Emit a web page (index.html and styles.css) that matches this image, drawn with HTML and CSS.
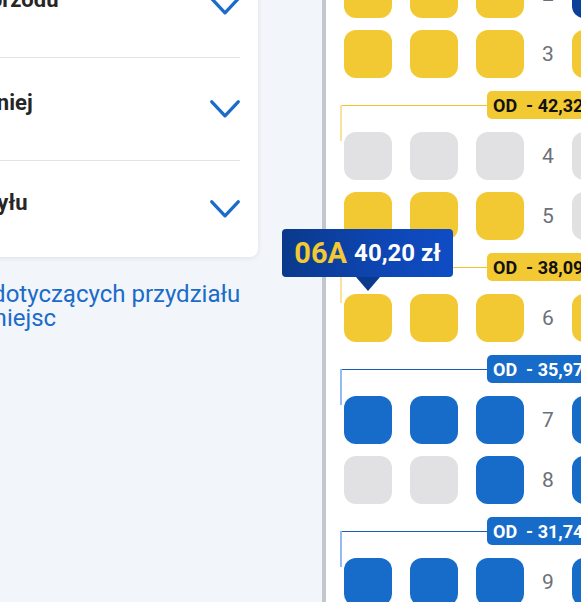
FILE: index.html
```html
<!DOCTYPE html>
<html lang="pl">
<head>
<meta charset="utf-8">
<title>Wybór miejsca</title>
<link rel="stylesheet" href="styles.css">
</head>
<body>
<div class="page">
  <aside class="side">
    <div class="card">
      <div class="opt">
        <span class="opt-label">Miejsce bliżej przodu</span>
        <svg class="chev" viewBox="0 0 30 18" width="30" height="18"><path d="M1.8 1.8 L15 15.8 L28.2 1.8"/></svg>
      </div>
      <div class="opt">
        <span class="opt-label">Miejsce w średniej</span>
        <svg class="chev" viewBox="0 0 30 18" width="30" height="18"><path d="M1.8 1.8 L15 15.8 L28.2 1.8"/></svg>
      </div>
      <div class="opt opt-last">
        <span class="opt-label">Miejsce bliżej tyłu</span>
        <svg class="chev" viewBox="0 0 30 18" width="30" height="18"><path d="M1.8 1.8 L15 15.8 L28.2 1.8"/></svg>
      </div>
    </div>
    <p class="info">Więcej informacji dotyczących przydziału miejsc</p>
  </aside>

  <main class="map">
    <div class="rows">
      <div class="row">
        <span class="seat y"></span><span class="seat y"></span><span class="seat y"></span>
        <span class="num">2</span>
        <span class="seat n"></span><span class="seat y"></span><span class="seat y"></span>
      </div>
      <div class="row">
        <span class="seat y"></span><span class="seat y"></span><span class="seat y"></span>
        <span class="num">3</span>
        <span class="seat y"></span><span class="seat y"></span><span class="seat y"></span>
      </div>

      <div class="ghead gy"><span class="grule"></span><span class="badge">OD<span class="bprice">- 42,32 zł</span></span><span class="gtail"></span></div>
      <div class="row">
        <span class="seat g"></span><span class="seat g"></span><span class="seat g"></span>
        <span class="num">4</span>
        <span class="seat g"></span><span class="seat g"></span><span class="seat g"></span>
      </div>
      <div class="row">
        <span class="seat y"></span><span class="seat y"></span><span class="seat y"></span>
        <span class="num">5</span>
        <span class="seat g"></span><span class="seat y"></span><span class="seat y"></span>
      </div>

      <div class="ghead gy"><span class="grule"></span><span class="badge">OD<span class="bprice">- 38,09 zł</span></span><span class="gtail"></span></div>
      <div class="row">
        <span class="seat y sel">
          <span class="tip"><b class="tip-code">06A</b> <span class="tip-price">40,20 zł</span></span>
        </span>
        <span class="seat y"></span><span class="seat y"></span>
        <span class="num">6</span>
        <span class="seat y"></span><span class="seat y"></span><span class="seat y"></span>
      </div>

      <div class="ghead gb"><span class="grule"></span><span class="badge">OD<span class="bprice">- 35,97 zł</span></span><span class="gtail"></span></div>
      <div class="row">
        <span class="seat b"></span><span class="seat b"></span><span class="seat b"></span>
        <span class="num">7</span>
        <span class="seat b"></span><span class="seat b"></span><span class="seat b"></span>
      </div>
      <div class="row">
        <span class="seat g"></span><span class="seat g"></span><span class="seat b"></span>
        <span class="num">8</span>
        <span class="seat b"></span><span class="seat b"></span><span class="seat b"></span>
      </div>

      <div class="ghead gb"><span class="grule"></span><span class="badge">OD<span class="bprice">- 31,74 zł</span></span><span class="gtail"></span></div>
      <div class="row">
        <span class="seat b"></span><span class="seat b"></span><span class="seat b"></span>
        <span class="num">9</span>
        <span class="seat b"></span><span class="seat b"></span><span class="seat b"></span>
      </div>
    </div>
  </main>
</div>
</body>
</html>
```

FILE: styles.css
```css
* { box-sizing: border-box; }

html, body {
  margin: 0;
  padding: 0;
}

body {
  background: #f2f6fb;
  font-family: Roboto, "Noto Sans", "Liberation Sans", sans-serif;
  overflow: hidden;
}

.page {
  display: flex;
  width: 581px;
  height: 602px;
  overflow: hidden;
}

/* ---------- left column ---------- */
.side {
  flex: 0 0 484px;
  width: 484px;
  margin-left: -226px;
  margin-right: 64px;
  display: flex;
  flex-direction: column;
}

.card {
  margin-top: -45px;
  background: #ffffff;
  border-radius: 8px;
  box-shadow: 0 1px 5px rgba(40, 60, 90, 0.10);
  padding: 0 18px 0 75px;
}

.opt {
  display: flex;
  align-items: center;
  justify-content: space-between;
  height: 102px;
}

.opt + .opt {
  border-top: 1px solid #e2e3e6;
  height: 103px;
}

.opt.opt-last {
  height: 97px;
}

.opt-label {
  font-size: 22px;
  line-height: 26px;
  font-weight: 700;
  color: #262626;
  margin-bottom: 13px;
}

.chev {
  flex: 0 0 auto;
  display: block;
}

.chev path {
  fill: none;
  stroke: #1b6bcb;
  stroke-width: 3.3;
  stroke-linecap: round;
  stroke-linejoin: round;
}

.info {
  margin: 25px 0 0;
  padding: 0 2px 0 12px;
  text-align: center;
  font-size: 24px;
  line-height: 24px;
  color: #1b6bc9;
}

/* ---------- seat map ---------- */
.map {
  flex: 0 0 640px;
  width: 640px;
  background: #ffffff;
  border-left: 4px solid #c3c6cc;
}

.rows {
  display: flex;
  flex-direction: column;
  gap: 12px;
  margin-top: -30px;
  padding-left: 18px;
}

.row {
  display: grid;
  grid-template-columns: 48px 48px 48px 12px 48px 48px 48px;
  column-gap: 18px;
  height: 48px;
  align-items: center;
}

.seat {
  display: block;
  width: 48px;
  height: 48px;
  border-radius: 12px;
}

.seat.y { background: #f2c933; }
.seat.g { background: #e1e1e3; }
.seat.b { background: #176bc9; }
.seat.n { background: #0b3f99; }

.num {
  justify-self: center;
  font-size: 21px;
  line-height: 24px;
  color: #6c7077;
}

/* group header */
.ghead {
  position: relative;
  display: flex;
  align-items: center;
  height: 30px;
  margin-left: -4px;
}

.ghead::before {
  content: "";
  position: absolute;
  left: 0;
  top: 15px;
  width: 2px;
  height: 36px;
}

.grule {
  flex: 0 0 147px;
  height: 1px;
}

.gtail {
  flex: 1 1 auto;
  height: 1px;
}

.badge {
  display: flex;
  align-items: center;
  height: 28px;
  padding: 0 8px 0 6px;
  border-radius: 5px;
  font-size: 18px;
  font-weight: 700;
  white-space: nowrap;
}

.bprice {
  margin-left: 9px;
}

.gy .grule, .gy .gtail { background: #efc42d; }
.gy::before { background: #f9e29a; }
.gy .badge { background: #f2c933; color: #111111; }

.gb .grule, .gb .gtail { background: #1a5db6; }
.gb::before { background: #93bbef; }
.gb .badge { background: #176bc9; color: #ffffff; }

/* tooltip */
.sel {
  position: relative;
}

.tip {
  position: absolute;
  z-index: 5;
  left: -62px;
  bottom: 65px;
  height: 48px;
  width: 171px;
  display: flex;
  align-items: center;
  justify-content: center;
  gap: 7px;
  border-radius: 4px;
  background: linear-gradient(90deg, #0a398b 0%, #0e46b4 60%, #0f4cc4 100%);
  white-space: nowrap;
}

.tip::after {
  content: "";
  position: absolute;
  left: 74px;
  top: 48px;
  width: 0;
  height: 0;
  border-left: 12.5px solid transparent;
  border-right: 12.5px solid transparent;
  border-top: 14px solid #0b3a8d;
}

.tip-code {
  font-size: 29px;
  font-weight: 700;
  color: #f2c933;
  line-height: 32px;
}

.tip-price {
  font-size: 24px;
  font-weight: 700;
  color: #ffffff;
  line-height: 32px;
}
```
